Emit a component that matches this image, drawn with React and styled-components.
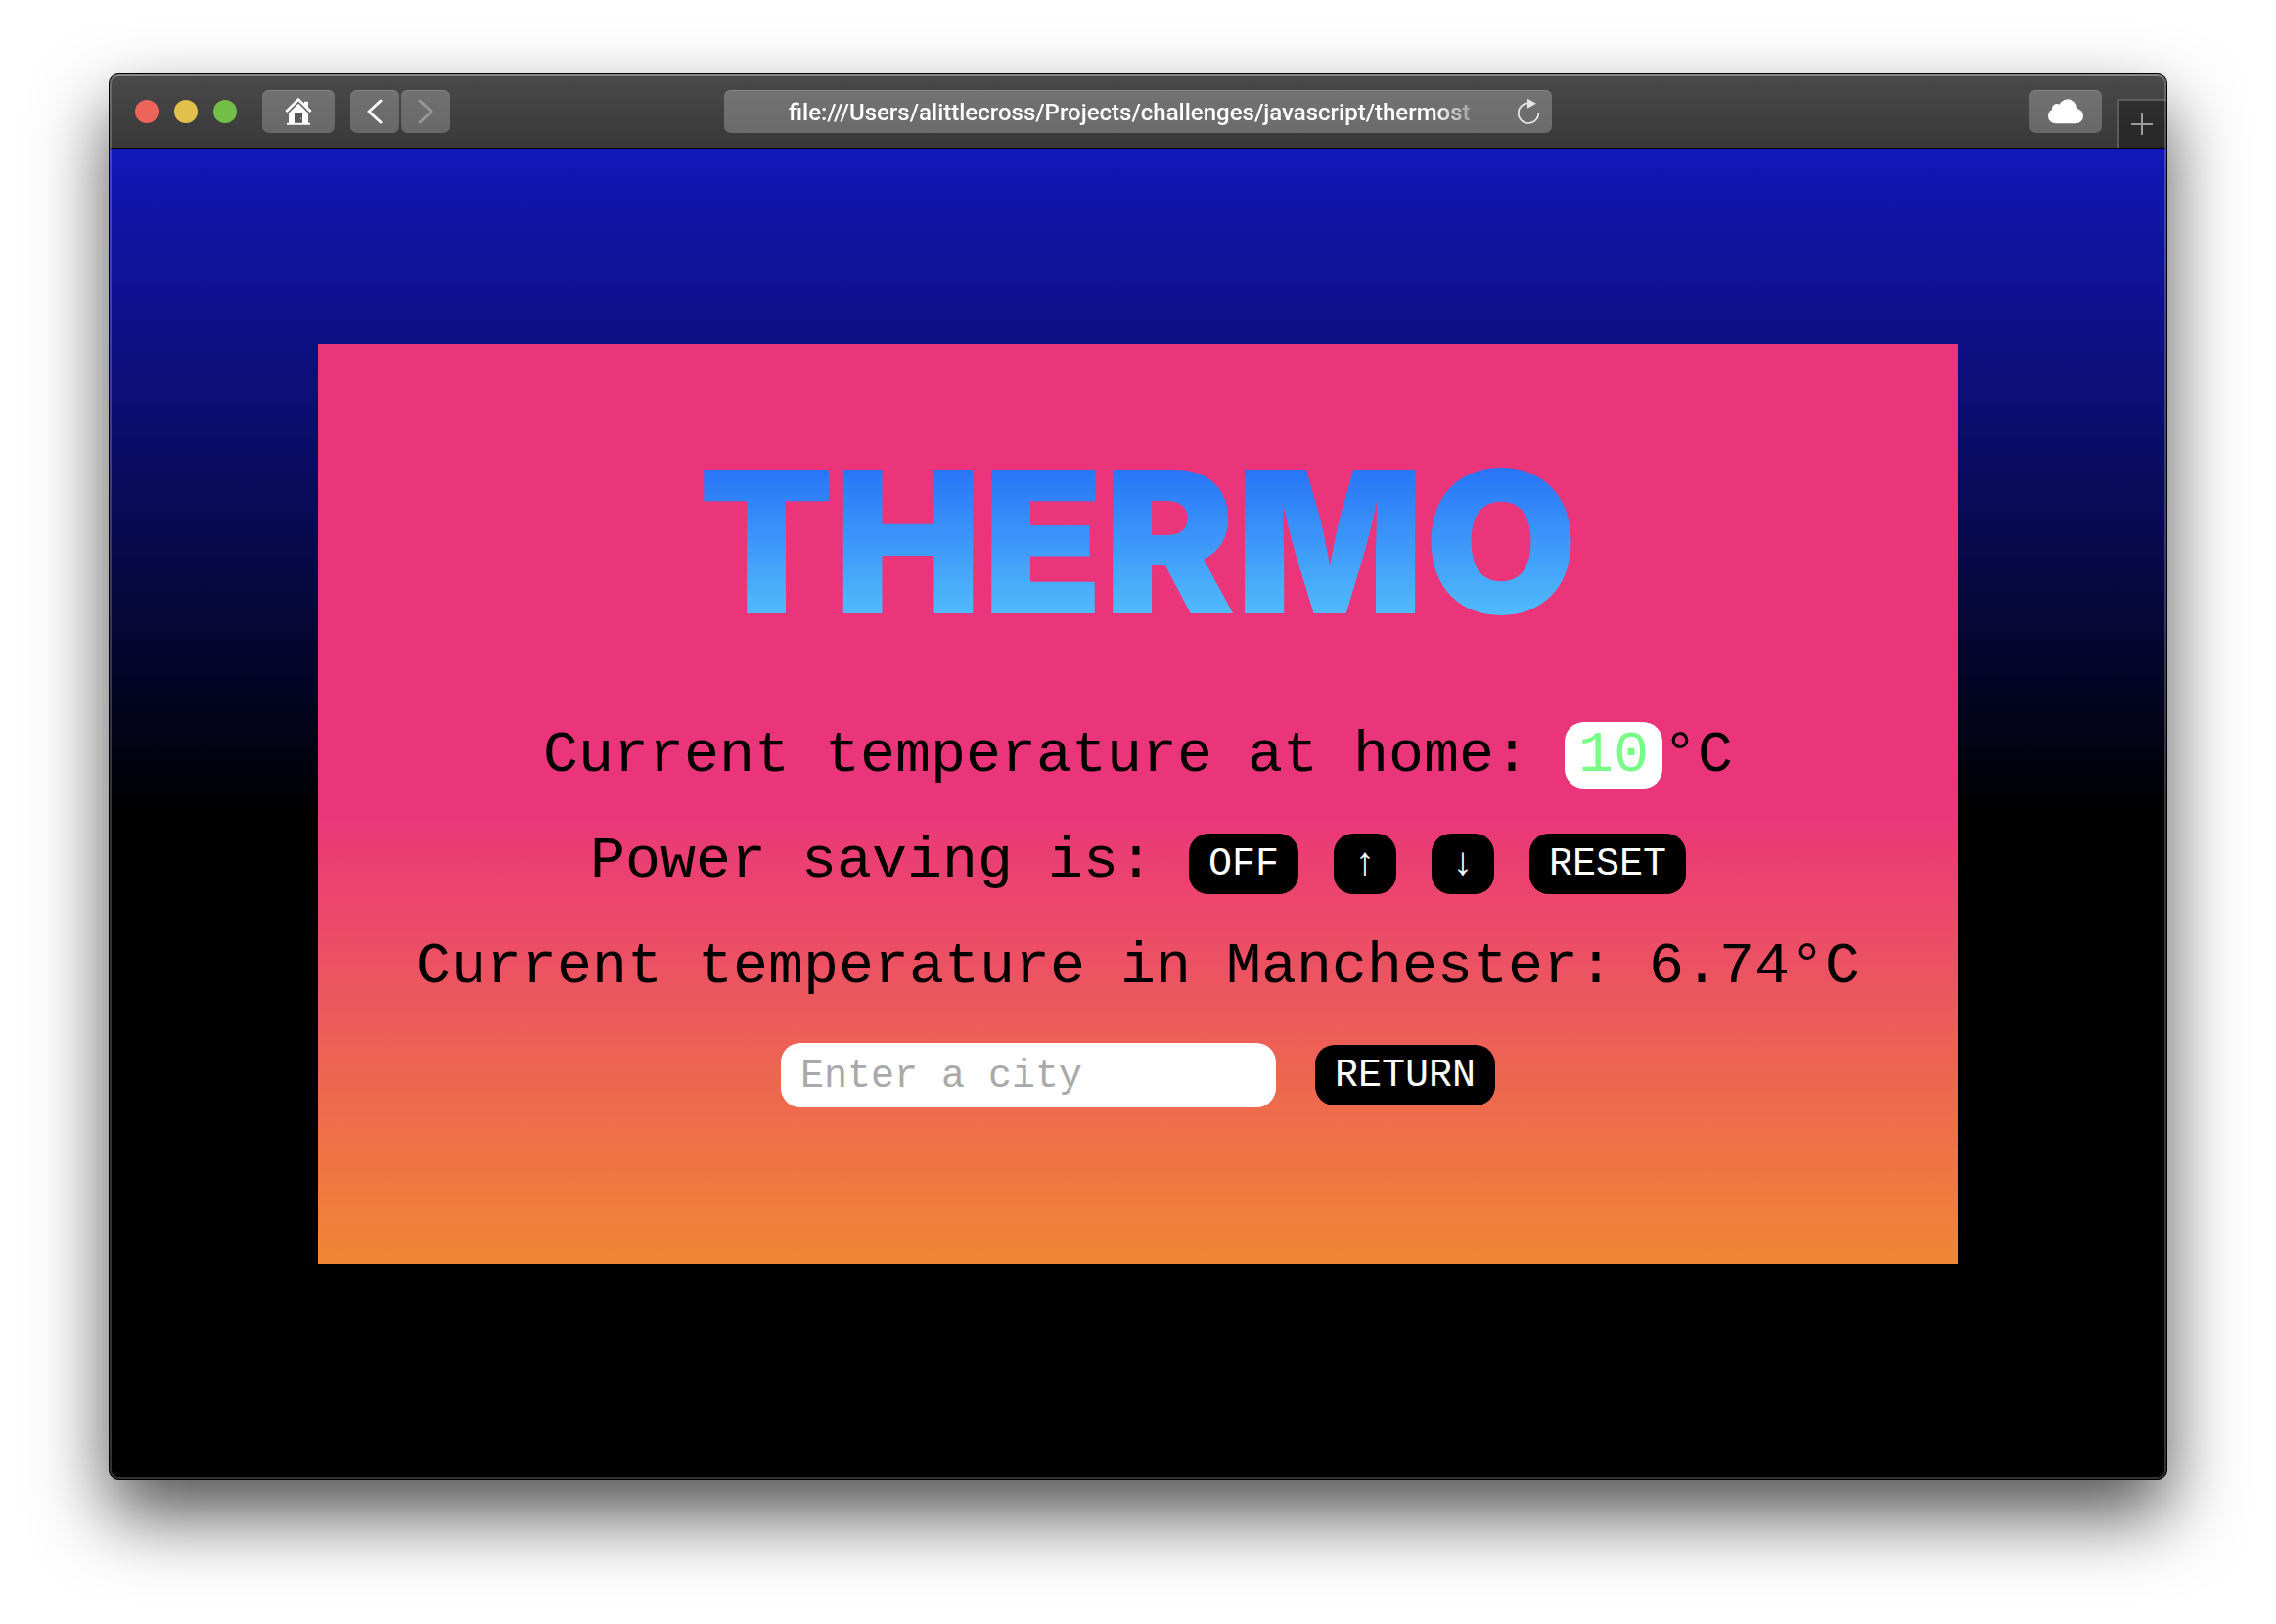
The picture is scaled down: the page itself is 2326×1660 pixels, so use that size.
import React from "react";
import styled, { createGlobalStyle } from "styled-components";

const mono = `"Liberation Mono", "Courier New", monospace`;

const GlobalStyle = createGlobalStyle`
  *, *::before, *::after { box-sizing: border-box; }
  body { margin: 0; background: #fff; font-family: ${mono}; }
  button, input { font: inherit; }
`;

const Desktop = styled.div`
  padding: 75px 111px 147px;
  overflow: hidden;
`;

const Window = styled.section`
  position: relative;
  border: 1px solid #000;
  border-radius: 10px;
  overflow: hidden;
  background: #000;
`;

const Shadow = styled.div`
  border-radius: 10px;
  box-shadow: 0 36px 76px rgba(0, 0, 0, 0.68);
`;

const Rim = styled.div`
  position: absolute;
  inset: 0;
  border: 2px solid rgba(255, 255, 255, 0.2);
  border-top-color: rgba(255, 255, 255, 0.34);
  border-radius: 9px;
  pointer-events: none;
`;

const Toolbar = styled.header`
  display: grid;
  grid-template-columns: 1fr minmax(0, 846px) 1fr;
  align-items: start;
  height: 76px;
  padding-top: 16px;
  background: linear-gradient(#4a4a4a, #383838);
  border-bottom: 1px solid #000;
`;

const LeftTools = styled.div`
  display: flex;
  align-items: center;
  gap: 16px;
  padding-left: 26px;
`;

const RightTools = styled.div`
  display: flex;
  justify-content: flex-end;
  gap: 16px;
`;

const Lights = styled.div`
  display: flex;
  gap: 16px;
  margin-right: 10px;
`;

const Light = styled.button`
  width: 24px;
  height: 24px;
  padding: 0;
  border: 0;
  border-radius: 50%;
  background: ${(p) => p.$color};
`;

const NavPair = styled.div`
  display: flex;
  gap: 2px;
`;

const ToolButton = styled.button`
  display: flex;
  align-items: center;
  justify-content: center;
  width: ${(p) => (p.$wide ? 74 : 50)}px;
  height: 44px;
  padding: 0;
  border: 0;
  border-radius: 7px;
  background: linear-gradient(#717171, #686868);
  box-shadow: inset 0 1px #868686;
  color: ${(p) => (p.disabled ? "#979797" : "#fff")};
`;

const NewTab = styled.button`
  display: flex;
  align-items: center;
  justify-content: center;
  width: 50px;
  height: 50px;
  margin-top: 9px;
  padding: 0 2px 0 0;
  border: solid #5b5b5b;
  border-width: 2px 0 0 2px;
  background: linear-gradient(#2f2f2f, #272727);
  color: #9b9b9b;
`;

const AddressBar = styled.div`
  display: flex;
  align-items: center;
  height: 44px;
  padding: 0 12px 0 66px;
  gap: 28px;
  border-radius: 7px;
  background: linear-gradient(#727272, #6b6b6b);
  box-shadow: inset 0 1px #868686;
`;

const Address = styled.input`
  flex: 1;
  min-width: 0;
  height: 44px;
  padding: 2px 0 0;
  border: 0;
  outline: 0;
  background: none;
  color: #fff;
  font-family: Roboto, "Noto Sans", sans-serif;
  font-size: 24px;
  font-weight: 500;
  mask-image: linear-gradient(to right, #000 calc(100% - 56px), transparent);
`;

const Reload = styled.button`
  display: flex;
  padding: 0;
  border: 0;
  background: none;
  color: #e6e6e6;
`;

const Page = styled.main`
  padding: 200px 213px 220px;
  background: linear-gradient(#1217b9, #000 50%);
`;

const Card = styled.article`
  display: flex;
  flex-direction: column;
  align-items: center;
  gap: 40px;
  padding: 92px 40px 160px;
  background: linear-gradient(#ea357b 50%, #f08734);
`;

const Title = styled.h1`
  margin: 0 0 34px;
  font-family: Inter, sans-serif;
  font-size: 202px;
  font-weight: 900;
  line-height: 220px;
  background: linear-gradient(#2874f7 16%, #51bbfb 84%);
  background-clip: text;
  color: transparent;
`;

const Line = styled.div`
  display: flex;
  flex-wrap: wrap;
  align-items: flex-end;
  justify-content: center;
  column-gap: 36px;
  font-size: 60px;
  line-height: 68px;
`;

const Reading = styled.output`
  display: inline-block;
  padding: 0 14px;
  border-radius: 20px;
  background: #fff;
  color: #78fd86;
`;

const CityForm = styled.form`
  display: flex;
  flex-wrap: wrap;
  align-items: center;
  justify-content: center;
  gap: 40px;
  padding-top: 4px;
`;

const Pill = styled.button`
  height: 62px;
  padding: 2px 20px 0;
  border: 0;
  border-radius: 20px;
  background: #000;
  color: #fff;
  font-size: 40px;
  line-height: 60px;
`;

const CityInput = styled.input`
  width: 506px;
  height: 66px;
  padding: 2px 20px 0;
  border: 0;
  border-radius: 20px;
  outline: 0;
  background: #fff;
  color: #000;
  font-size: 40px;
  &::placeholder { color: #a9a9a9; opacity: 1; }
`;

const HomeIcon = () => (
  <svg width="28" height="30" viewBox="603 148 84 90" aria-hidden="true">
    <path d="M663 162h12v24l-12-11z" fill="currentColor" />
    <path d="M607 193l38-37 38 37" fill="none" stroke="currentColor" strokeWidth="8" />
    <path d="M615 228v-30l30-30 30 30v30h6v6h-72v-6z" fill="currentColor" />
    <path d="M633 198h24v30h-24z" fill="#555" />
    <path d="M651 213h3v3h-3z" fill="currentColor" />
  </svg>
);

const Chevron = ({ points }) => (
  <svg width="16" height="26" viewBox="0 0 16 26" aria-hidden="true">
    <polyline points={points} fill="none" stroke="currentColor" strokeWidth="3" strokeLinecap="round" strokeLinejoin="round" />
  </svg>
);

const ReloadIcon = () => (
  <svg width="24" height="28" viewBox="750 88 72 84" aria-hidden="true">
    <path d="M817 134a31 31 0 1 1-31-30" fill="none" stroke="currentColor" strokeWidth="5" />
    <path d="M783 90l27 15-27 15z" fill="currentColor" />
  </svg>
);

const CloudIcon = () => (
  <svg width="36" height="26" viewBox="189 122 108 78" fill="currentColor" aria-hidden="true">
    <circle cx="212" cy="175" r="23" />
    <circle cx="274" cy="175" r="23" />
    <circle cx="216" cy="152" r="15" />
    <circle cx="250" cy="153" r="30" />
    <path d="M212 150h62v48h-62z" />
  </svg>
);

const PlusIcon = () => (
  <svg width="22" height="22" viewBox="0 0 22 22" aria-hidden="true">
    <path d="M11 0v22M0 11h22" stroke="currentColor" strokeWidth="2" />
  </svg>
);

export default function App() {
  return (
    <Desktop>
      <GlobalStyle />
      <Shadow>
        <Window>
          <Toolbar>
            <LeftTools>
              <Lights>
                <Light $color="#ed655a" aria-label="Close" />
                <Light $color="#e1c04c" aria-label="Minimise" />
                <Light $color="#72be47" aria-label="Zoom" />
              </Lights>
              <ToolButton $wide aria-label="Home"><HomeIcon /></ToolButton>
              <NavPair>
                <ToolButton aria-label="Back"><Chevron points="14,2 2,13 14,24" /></ToolButton>
                <ToolButton aria-label="Forward" disabled><Chevron points="2,2 14,13 2,24" /></ToolButton>
              </NavPair>
            </LeftTools>
            <AddressBar>
              <Address
                aria-label="Address"
                readOnly
                value="file:///Users/alittlecross/Projects/challenges/javascript/thermost"
              />
              <Reload aria-label="Reload"><ReloadIcon /></Reload>
            </AddressBar>
            <RightTools>
              <ToolButton $wide aria-label="iCloud tabs"><CloudIcon /></ToolButton>
              <NewTab aria-label="New tab"><PlusIcon /></NewTab>
            </RightTools>
          </Toolbar>
          <Page>
            <Card>
              <Title>THERMO</Title>
              <Line>
                <span>Current temperature at home: <Reading>10</Reading>°C</span>
              </Line>
              <Line>
                <span>Power saving is:</span>
                <Pill type="button">OFF</Pill>
                <Pill type="button" aria-label="Warmer">↑</Pill>
                <Pill type="button" aria-label="Cooler">↓</Pill>
                <Pill type="button">RESET</Pill>
              </Line>
              <Line>
                <span>Current temperature in Manchester: 6.74°C</span>
              </Line>
              <CityForm onSubmit={(e) => e.preventDefault()}>
                <CityInput type="text" aria-label="City" placeholder="Enter a city" />
                <Pill type="submit">RETURN</Pill>
              </CityForm>
            </Card>
          </Page>
          <Rim />
        </Window>
      </Shadow>
    </Desktop>
  );
}
